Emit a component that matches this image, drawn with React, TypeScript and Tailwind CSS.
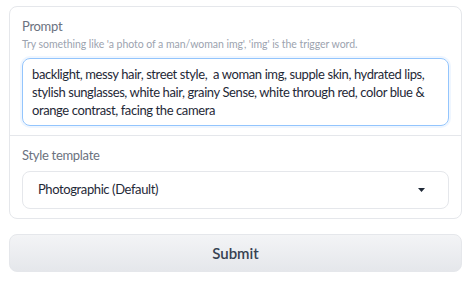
import React from 'react';

const prompt =
  "backlight, messy hair, street style,  a woman img, supple skin, hydrated lips, stylish sunglasses, white hair, grainy Sense, white through red, color blue & orange contrast, facing the camera";

const App: React.FC = () => {
  return (
    <div className="w-[473px] h-[282px] bg-white pl-[9px] pr-[11px] pt-[6px] font-['Source_Sans_Pro','Lato',sans-serif]">
      <div className="rounded-lg border border-[#e5e7eb] bg-white">
        <div className="px-[12px] pt-[10px] pb-[9px]">
          <div className="text-[13px] leading-[18px] tracking-[-0.3px] text-[#6b7280]">Prompt</div>
          <div className="mt-[2px] text-[10.5px] leading-[14px] tracking-[-0.05px] text-[#9ca3af]">
            Try something like 'a photo of a man/woman img', 'img' is the trigger word.
          </div>
          <textarea
            readOnly
            rows={3}
            value={prompt}
            className="mt-[7px] block w-full resize-none rounded-lg border border-[#93c5fd] px-[9px] py-[6px] text-[13px] leading-[18px] tracking-[-0.4px] text-[#1f2937] shadow-[0_0_0_2px_#eff6ff] outline-none"
          />
        </div>
        <div className="border-t border-[#e5e7eb] px-[12px] pt-[10px] pb-[9px]">
          <div className="text-[13px] leading-[18px] tracking-[-0.3px] text-[#6b7280]">Style template</div>
          <div className="mt-[7px] flex h-[38px] items-center justify-between rounded-lg border border-[#e5e7eb] pl-[15px] pr-[23px]">
            <span className="text-[13px] tracking-[-0.4px] text-[#1f2937]">Photographic (Default)</span>
            <svg width="7" height="4" viewBox="0 0 7 4">
              <path d="M0 0h7L3.5 4z" fill="#1f2937" />
            </svg>
          </div>
        </div>
      </div>
      <button className="mt-[15px] h-[38px] w-full rounded-lg border border-[#e5e7eb] bg-gradient-to-b from-[#f3f4f6] to-[#e5e7eb] text-[15px] font-semibold text-[#374151]">
        Submit
      </button>
    </div>
  );
};

export default App;
